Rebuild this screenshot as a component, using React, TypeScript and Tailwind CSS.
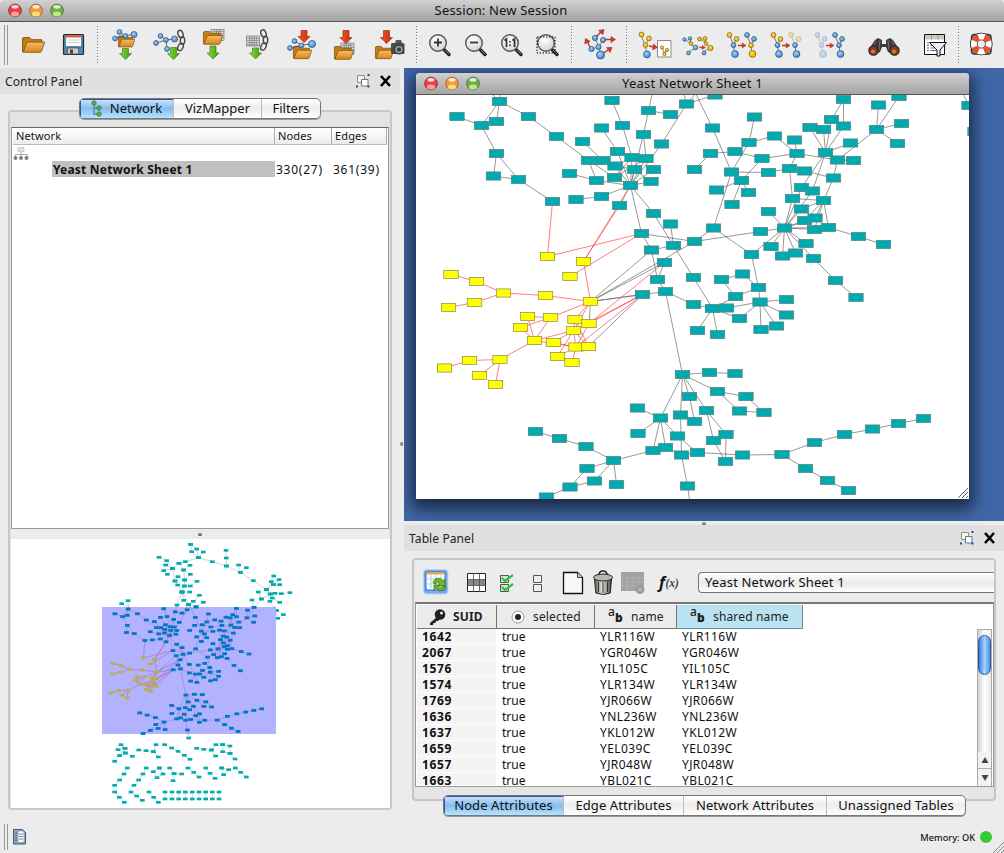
import React from "react";

type Pt = [number, number];

const N: Record<string, Pt> = {
  a1: [499.5, 101.5], a2: [457, 116.5], a3: [481.5, 125.5], a4: [496.5, 121.5], a5: [528.5, 116.5], a6: [556.5, 136.5],
  a7: [496.5, 153.5], a8: [493.5, 176], a9: [518.5, 179.5], a10: [552.5, 201.5],
  b1: [612, 100.5], b2: [622.5, 125.5], b3: [601.5, 128], b4: [582.5, 141.5], b5: [588.5, 160.5], b6: [603, 160.5],
  b7: [617.5, 151.5], b8: [632, 157.5], b9: [646, 158.5], b10: [643.5, 134.5], b11: [648.5, 110.5], b12: [670.5, 114.5],
  b13: [686.5, 104], b14: [661.5, 144], b15: [615, 166], b16: [634.5, 169.5], b17: [653.5, 169.5], b18: [614.5, 177.5],
  b19: [596.5, 180.5], b20: [569.5, 173.5], b21: [651, 181.5], b22: [630.5, 185.5], b23: [576, 199.5], b24: [601.5, 196.5],
  b25: [619.5, 205.5],
  c1: [653.5, 213.5], c2: [670.5, 224], c3: [641.5, 233.5], c4: [673.5, 245.5], c5: [694.5, 241.5], c6: [651.5, 250],
  c7: [664.5, 262.5], c8: [657.5, 279.5], c9: [693.5, 277.5], c10: [665.5, 291.5], c11: [642.5, 294.5],
  d1: [715, 95], d2: [712.5, 128], d3: [754.5, 117], d4: [749, 142.5], d5: [710.5, 153.5], d6: [735, 151.5],
  d7: [774.5, 136], d8: [794.5, 140], d9: [797, 153.5], d10: [762, 158.5], d11: [731.5, 172], d12: [768.5, 172.5],
  d13: [789.5, 168.5], d14: [804.5, 171], d15: [741.5, 180.5], d16: [716.5, 190], d17: [748.5, 192.5], d18: [732, 204.5],
  d19: [694.5, 169.5],
  e1: [843.5, 99.5], e2: [831.5, 119.5], e3: [843.5, 126], e4: [810, 127.5], e5: [823.5, 129.5], e6: [825.5, 152.5],
  e7: [850.5, 143], e8: [837.5, 160], e9: [853.5, 160.5], e10: [833.5, 178], e11: [801.5, 187.5], e12: [812.5, 191],
  e13: [792.5, 198.5], e14: [823.5, 200.5], e15: [801.5, 209], e16: [804.5, 220.5], e17: [815, 218], e18: [814.5, 229.5],
  e19: [828.5, 227.5], e20: [768.5, 211.5], e21: [713.5, 228], e22: [760.5, 231.5], e23: [784.5, 228], e24: [771, 246.5],
  e25: [782.5, 256], e26: [795.5, 253], e27: [806, 243.5], e28: [813.5, 258.5], e29: [835.5, 280.5], e30: [856, 297.5],
  e31: [858.5, 236.5], e32: [883.5, 244.5], e33: [751.5, 254.5],
  f1: [878.5, 105], f2: [899, 96.5], f3: [901.5, 123.5], f4: [897.5, 143.5], f5: [876.5, 129.5], f6: [969, 105.5], f7: [975, 131.5],
  g1: [742.5, 274], g2: [721.5, 279.5], g3: [735.5, 296.5], g4: [758.5, 287.5], g5: [760, 302], g6: [786.5, 299.5],
  g7: [786.5, 315], g8: [776.5, 326], g9: [761, 329.5], g10: [739.5, 318.5], g11: [726.5, 308], g12: [712.5, 308.5],
  g13: [693.5, 304.5], g14: [717.5, 334.5], g15: [697.5, 330.5],
  h1: [682.5, 374.5], h2: [709.5, 372.5], h3: [735, 373.5], h4: [717.5, 391.5], h5: [746, 396.5], h6: [739.5, 411],
  h7: [764, 412.5], h8: [689.5, 396.5], h9: [706.5, 410.5], h10: [680.5, 415], h11: [694.5, 421.5], h12: [637.5, 408],
  h13: [660.5, 418], h14: [638, 433.5], h15: [677.5, 436], h16: [653, 450.5], h17: [665.5, 447.5], h18: [681.5, 455],
  h19: [697.5, 452.5], h20: [713.5, 440.5], h21: [726, 434.5], h22: [725.5, 461.5], h23: [742.5, 455], h24: [782, 454.5],
  h25: [814.5, 442.5], h26: [844.5, 434.5], h27: [872.5, 429], h28: [898.5, 423.5], h29: [923.5, 418.5], h30: [805.5, 468.5],
  h31: [827.5, 480.5], h32: [848.5, 490.5], h33: [687.5, 486], h34: [613.5, 460.5], h35: [586, 446.5], h36: [559.5, 438.5],
  h37: [535.5, 431.5], h38: [587, 468.5], h39: [594.5, 481], h40: [616.5, 484.5], h41: [570, 487], h42: [546.5, 497],
  y1: [451, 274.5], y2: [476.5, 281.5], y3: [503.5, 293], y4: [474.5, 302.5], y5: [448.5, 307.5], y6: [545.5, 295.5],
  y7: [590.5, 301.5], y8: [527.5, 316.5], y9: [520.5, 327.5], y10: [550.5, 317.5], y11: [534.5, 340.5], y12: [553.5, 342.5],
  y13: [575, 319.5], y14: [589, 323.5], y15: [573.5, 330.5], y16: [576, 347], y17: [588.5, 346.5], y18: [557.5, 356.5],
  y19: [572, 362.5], y20: [500, 359.5], y21: [469.5, 360.5], y22: [444.5, 368], y23: [479.5, 375.5], y24: [495.5, 384.5],
  y25: [547.5, 256.5], y26: [583.5, 261.5], y27: [570, 276.5],
  // points beyond the visible canvas
  t1: [491, 93], t2: [500, 90], t3: [653, 90], t4: [683, 90], t5: [697, 92], t6: [694, 90], t7: [962, 92], t8: [690, 503],
};

const GREY =
  "a1-a3 a1-a4 a1-a5 a2-a3 a3-a4 a3-a7 a5-a6 a7-a8 a7-a9 a8-a9 a9-a10 a1-t1 a1-t2 a6-b5 b5-b6 b4-b6 b5-b19 b5-b18 b6-b15 b1-b2 b2-b8 b3-b7 b7-b22 b8-b22 b8-b9 b9-b22 b9-b10 b10-b11 b11-b12 b11-t3 b10-b22 b13-b14 b14-b22 b13-t4 b13-t5 b13-d1 b15-b22 b15-b16 b16-b22 b17-b22 b18-b22 b19-b22 b20-b19 b21-b22 b8-b15 b8-b18 b16-b21 b9-b18 b23-b24 b24-b22 b25-b22 b22-c1 b22-c3 c1-c4 c2-c4 c3-c5 c3-c6 c4-c6 c4-c9 c5-e21 c5-e22 c6-c8 c7-c8 c8-c10 c10-c11 c10-g13 c9-g12 c10-h1 t6-d2 d2-d11 d3-d4 d4-d7 d7-d9 d8-d9 d4-d11 d5-d6 d5-d19 d6-d10 d10-d9 d10-d15 d11-d12 d12-d13 d13-d14 d14-e10 d9-d13 d9-e8 d11-d15 d15-d16 d15-d17 d15-d18 d11-e21 d13-e13 e1-e2 e1-e3 e2-e6 e3-e6 e4-e6 e5-e6 e7-e6 e8-e6 e8-e9 e8-e10 e8-f5 e6-e11 e6-e12 e2-e5 e10-e14 e11-e23 e12-e23 e13-e23 e13-e14 e14-e15 e14-e17 e14-e19 e14-e16 e14-e18 e15-e23 e16-e23 e17-e23 e18-e23 e19-e23 e20-e23 e22-e23 e23-e24 e23-e25 e23-e26 e23-e27 e23-e28 e23-e33 e21-e33 e28-e29 e29-e30 e19-e31 e31-e32 e33-g4 f5-f1 f5-f2 f5-f3 f5-f4 f6-t7 g1-g2 g1-g4 g2-g3 g3-g4 g4-g5 g3-g12 g5-g6 g5-g7 g5-g8 g5-g9 g5-g10 g5-g11 g11-g12 g10-g12 g12-g13 g12-g14 g12-g15 h1-h2 h2-h3 h1-h4 h4-h5 h4-h6 h5-h7 h6-h7 h1-h8 h8-h11 h1-h9 h1-h10 h10-h11 h10-h18 h1-h13 h12-h13 h13-h14 h13-h15 h13-h16 h13-h17 h15-h19 h17-h18 h18-h19 h9-h20 h9-h21 h20-h22 h21-h22 h19-h23 h23-h24 h24-h25 h25-h26 h26-h27 h27-h28 h28-h29 h24-h30 h30-h31 h31-h32 h18-h33 h33-t8 h16-h34 h34-h35 h35-h36 h36-h37 h34-h38 h34-h39 h34-h40 h38-h41 h39-h41 h41-h42 y7-c6 y7-c7 y7-c5 y7-c11 y7-c11 y7-y14 y17-c11";
const RED =
  "y1-y2 y2-y3 y3-y4 y4-y5 y3-y6 y6-y7 y7-y10 y8-y10 y8-y11 y9-y10 y9-y11 y10-y11 y11-y15 y11-y20 y20-y21 y21-y22 y20-y23 y20-y24 y7-y13 y7-y15 y13-y14 y13-y15 y14-y15 y15-y16 y15-y17 y15-y12 y12-y16 y16-y17 y15-y18 y18-y16 y16-y19 y14-y16 y13-y17 y11-y16 y7-y26 y26-b25 y26-b22 y25-a10 y25-c3 y27-c3 y14-c7 y14-c11 y15-c11 y16-c11";

const toLines = (s: string) => s.split(" ").map((e) => e.split("-").map((k) => N[k]) as [Pt, Pt]);
const greyLines = toLines(GREY);
const redLines = toLines(RED);

function Edges({ red, grey }: { red: string; grey: string }) {
  return (
    <>
      {greyLines.map(([p, q], i) => (
        <line key={i} x1={p[0]} y1={p[1]} x2={q[0]} y2={q[1]} stroke={grey} />
      ))}
      {redLines.map(([p, q], i) => (
        <line key={i} x1={p[0]} y1={p[1]} x2={q[0]} y2={q[1]} stroke={red} />
      ))}
    </>
  );
}

function Graph() {
  return (
    <svg className="block h-[404px] w-[553px]" viewBox="416 95 553 404">
      <g strokeWidth="0.65">
        <Edges red="#ff3b3b" grey="#606060" />
      </g>
      {Object.entries(N).map(([k, [x, y]]) =>
        k[0] === "t" ? null : (
          <rect key={k} x={x - 7.2} y={y - 4.1} width="14.4" height="8.2" fill={k[0] === "y" ? "#ffff00" : "#00abb0"} stroke={k[0] === "y" ? "#8a8a50" : "#5f7f80"} strokeWidth="0.7" />
        )
      )}
      <path d="M958 498l10-10M962 498l6-6M966 498l2-2" stroke="#555" strokeWidth="0.9" />
    </svg>
  );
}

const CHAINS: Pt[][] = [
  [[572, 73], [575, 95], [595, 113], [590, 87], [572, 73]], [[610, 96], [595, 113], [637, 125], [679, 138], [679, 114], [678, 91]],
  [[679, 138], [721, 157], [716, 135]], [[739, 143], [721, 157], [760, 182], [799, 209], [814, 185], [821, 168]],
  [[837, 179], [820, 194], [839, 194]], [[820, 194], [799, 209], [812, 222], [825, 220], [844, 221], [870, 218]],
  [[812, 222], [784, 237], [775, 216]], [[784, 237], [762, 262], [756, 240]], [[799, 209], [817, 234], [839, 247]],
  [[799, 209], [810, 244], [829, 271], [850, 284], [833, 295], [829, 271]], [[762, 262], [741, 293]],
  [[595, 113], [556, 125], [537, 130], [518, 146], [500, 122], [477, 112]], [[497, 135], [518, 146], [491, 152]],
  [[502, 163], [518, 146], [525, 183], [533, 195], [546, 216], [553, 198], [554, 180], [551, 150], [570, 136]],
  [[537, 130], [551, 150]], [[534, 170], [525, 183]], [[571, 163], [554, 180]], [[591, 184], [571, 198], [553, 198]],
  [[546, 216], [569, 216]], [[546, 216], [531, 255], [525, 275]], [[546, 216], [551, 241], [566, 253], [562, 268]],
  [[546, 216], [566, 253], [580, 244], [598, 226]], [[566, 253], [588, 260], [610, 247]], [[365, 251], [384, 268], [384, 242]],
  [[566, 253], [586, 292]], [[562, 630], [566, 654]],
  [[344, 724], [359, 707], [375, 685], [354, 689], [376, 699], [363, 674], [375, 685]], [[359, 707], [376, 699], [397, 709]],
  [[416, 690], [438, 692], [460, 695], [468, 674]], [[460, 695], [475, 711]],
  [[494, 674], [515, 684], [534, 694], [553, 706], [570, 718]], [[590, 685], [611, 688], [634, 690], [648, 674]], [[634, 690], [647, 708]],
  [[668, 674], [668, 695], [690, 700], [705, 717]], [[668, 674], [690, 678], [690, 700]],
  [[382, 744], [372, 762], [359, 780], [344, 796]], [[439, 744], [429, 762], [416, 780], [402, 796]],
  [[478, 744], [460, 755], [471, 773], [489, 762], [478, 744]], [[509, 744], [522, 761], [545, 762]], [[522, 761], [519, 782]],
  [[564, 744], [581, 757], [597, 771]], [[617, 744], [630, 760], [645, 775]], [[665, 744], [686, 749], [671, 764], [665, 744]],
  [[706, 744], [722, 757], [739, 771]], [[344, 816], [358, 832], [373, 847]], [[393, 816], [410, 828], [427, 841]],
  [[447, 816], [461, 832], [475, 847]],
  ...[495, 516, 536, 556, 577, 597, 617, 637, 657].map((x): Pt[] => [[x, 816], [x, 837]]),
];

function Overview() {
  const inside = (p: Pt) => p[0] > 306 && p[0] < 828 && p[1] > 262 && p[1] < 641;
  return (
    <svg className="block h-[269px] w-[379px] bg-white" viewBox="33 57 1137 807">
      {CHAINS.map((c, i) => (
        <polyline key={i} points={c.join(" ")} fill="none" stroke="#c3c3be" strokeWidth="2" />
      ))}
      {CHAINS.flat().filter((p) => !inside(p)).map((p, i) => (
        <rect key={i} x={p[0] - 7} y={p[1] - 4} width="14" height="8" fill="#00adb0" />
      ))}
      <rect x="306" y="261" width="522" height="381" fill="#b2b2ff" />
      <g transform="translate(306 261) scale(.944) translate(-416 -95)">
        <g strokeWidth="2" opacity=".75">
          <Edges red="#c050a8" grey="#8a80c0" />
        </g>
        {Object.entries(N).map(([k, [x, y]]) =>
          k[0] === "t" || k === "f6" || k === "f7" ? null : <rect key={k} x={x - 7.5} y={y - 4.5} width="15" height="9" fill={k[0] === "y" ? "#b8b04c" : "#0077c8"} />
        )}
      </g>
    </svg>
  );
}

function Defs() {
  return (
    <svg className="absolute h-0 w-0">
      <defs>
        <linearGradient id="fold" x1="0" y1="0" x2="0" y2="1">
          <stop offset="0" stopColor="#f6bd62" />
          <stop offset="1" stopColor="#d98516" />
        </linearGradient>
        <radialGradient id="blue" cx=".4" cy=".35" r=".65">
          <stop offset="0" stopColor="#a5d2ff" />
          <stop offset="1" stopColor="#3f86d0" />
        </radialGradient>
        <radialGradient id="gold" cx=".4" cy=".35" r=".65">
          <stop offset="0" stopColor="#ffe14a" />
          <stop offset="1" stopColor="#e8ae00" />
        </radialGradient>
        <radialGradient id="glass" cx=".4" cy=".3" r=".75">
          <stop offset="0" stopColor="#ffffff" />
          <stop offset="1" stopColor="#cfd3d3" />
        </radialGradient>
        <linearGradient id="green" x1="0" y1="0" x2="1" y2="0">
          <stop offset="0" stopColor="#8be03a" />
          <stop offset="1" stopColor="#3f9a10" />
        </linearGradient>
        <linearGradient id="red" x1="0" y1="0" x2="1" y2="0">
          <stop offset="0" stopColor="#f0562c" />
          <stop offset="1" stopColor="#c92c08" />
        </linearGradient>
        <linearGradient id="can" x1="0" y1="0" x2="1" y2="0">
          <stop offset="0" stopColor="#55554c" />
          <stop offset=".45" stopColor="#e8e8dc" />
          <stop offset="1" stopColor="#44443c" />
        </linearGradient>
      </defs>
    </svg>
  );
}

const Folder = ({ x, y, s = 1 }: { x: number; y: number; s?: number }) => (
  <g transform={`translate(${x} ${y}) scale(${s})`} stroke="#7c5215" strokeWidth="0.9" strokeLinejoin="round">
    <path d="M.5 14.5V1.2L1.5.5h6l1.8 2.2h10.5v3L17 14.5z" fill="#c77d16" />
    <path d="M1 15.2L4.800 5.8l1.400-.7h16.300L19.400 14.500l-1 .8z" fill="url(#fold)" />
  </g>
);
const Down = ({ x, y, fill, h = 12 }: { x: number; y: number; fill: string; h?: number }) => (
  <path d={`M${x - 3} ${y}h6v${h - 6}h3l-6 6l-6-6h3z`} fill={`url(#${fill})`} stroke={fill === "red" ? "#9c3018" : "#4b7c22"} strokeWidth="0.7" />
);
const Ball = ({ p, r = 2.4, c = "blue", o = 1 }: { p: Pt; r?: number; c?: string; o?: number }) => (
  <circle cx={p[0]} cy={p[1]} r={r} fill={`url(#${c})`} stroke={c === "blue" ? "#31587f" : "#8c6a08"} strokeWidth="0.8" opacity={o} />
);
const Arrow = ({ d }: { d: string }) => <path d={d} stroke="#cc3328" strokeWidth="1.5" fill="none" />;
const Head = ({ x, y, a, s = 1 }: { x: number; y: number; a: number; s?: number }) => (
  <path transform={`translate(${x} ${y}) rotate(${a}) scale(${s})`} d="M0 0l-4.500-3v6z" fill="#d8382a" stroke="#8c2820" strokeWidth="0.5" />
);
const RightArrow = ({ x }: { x: number }) => (
  <>
    <Arrow d={`M${x} 45.500h5`} />
    <Head x={x + 8} y={45.5} a={0} s={0.85} />
  </>
);
const Grid = ({ x, y, w = 13, h = 11 }: { x: number; y: number; w?: number; h?: number }) => (
  <g stroke="#777" strokeWidth="0.7">
    <rect x={x} y={y} width={w} height={h} fill="#e4e4e4" />
    {[2.2, 4.4, 6.6, 8.8].map((k) => <path key={k} d={`M${x} ${y + k}h${w}M${x + k + 1} ${y}v${h}`} />)}
  </g>
);
const Chain = ({ x, y }: { x: number; y: number }) => (
  <g fill="none" stroke="#4a4a4a" strokeWidth="1.500">
    <ellipse cx={x} cy={y + 4} rx="2.500" ry="3.800" transform={`rotate(-20 ${x} ${y + 4})`} />
    <ellipse cx={x + 2} cy={y + 10.5} rx="2.200" ry="3.800" />
    <ellipse cx={x} cy={y + 17} rx="2.500" ry="3.800" transform={`rotate(25 ${x} ${y + 17})`} />
  </g>
);
const Lens = ({ x }: { x: number }) => (
  <>
    <path d={`M${x + 6} 49.500l5 5`} stroke="#222" strokeWidth="3.400" strokeLinecap="round" />
    <path d={`M${x + 7} 50l4 4`} stroke="#888" strokeWidth="1" />
    <circle cx={x} cy="43" r="8.300" fill="url(#glass)" stroke="#555" strokeWidth="1.400" />
  </>
);
const Tree = ({ x, c, big, o = 1 }: { x: number; c: string; big: string; o?: number }) => (
  <g opacity={o}>
    <path d={`M${x} 35l4 10l1 9M${x + 7} 39l-3 6`} stroke="#555" strokeWidth="0.8" fill="none" />
    <Ball p={[x, 35]} c={c} />
    <Ball p={[x + 7, 39]} c={c} />
    <Ball p={[x + 4, 45.2]} c={big} />
    <Ball p={[x + 5.5, 54]} c={big} r={3.4} />
  </g>
);

function Slot({ x, w, children }: { x: number; w: number; children?: React.ReactNode }) {
  return (
    <svg className="block h-full shrink-0" width={w} height="46" viewBox={`${x} 22 ${w} 46`}>
      {children}
    </svg>
  );
}
const Sep = ({ x }: { x: number }) => <path d={`M${x} 26v38`} stroke="#777" strokeWidth="1" strokeDasharray="1 2" />;

function Toolbar() {
  return (
    <div className="flex h-[46px] shrink-0 bg-[#ececec]">
      <Slot x={0} w={16}><path d="M4.500 25v40M7.500 25v40" stroke="#999" /></Slot>
      <Slot x={16} w={38}><Folder x={22} y={37} /></Slot>
      <Slot x={54} w={38}>
        <rect x="63.500" y="34.500" width="20" height="20" rx="1" fill="#5b85a8" stroke="#1e2c38" strokeWidth="1.200" />
        <path d="M66 35h15v11H66z" fill="#fff" />
        <path d="M66 35h15v2.500H66z" fill="#d8604a" />
        <path d="M67.500 40h12M67.500 42.500h12" stroke="#bbb" strokeWidth=".8" />
        <path d="M67.500 48h11v6h-11z" fill="#ccc" stroke="#3b4a55" strokeWidth=".7" />
        <path d="M70 49.500h3v4h-3z" fill="#444" />
      </Slot>
      <Slot x={92} w={12}><Sep x={97.500} /></Slot>
      <Slot x={104} w={42}>
        <Folder x={118} y={35.500} s={0.75} />
        <path d="M119 32l6.500 4l8-2M115 38l10-2" stroke="#345" strokeWidth=".8" fill="none" />
        <Ball p={[119.500, 32]} /><Ball p={[115, 38.500]} /><Ball p={[125.500, 36]} /><Ball p={[134, 34.500]} r={3} />
        <Down x={125.500} y={48.500} h={11} fill="green" />
      </Slot>
      <Slot x={146} w={48}>
        <path d="M156 43l10-3l8-1M161 36l5 4l1 9" stroke="#345" strokeWidth=".8" fill="none" />
        <Ball p={[156, 43]} /><Ball p={[160.500, 36]} /><Ball p={[166, 40]} /><Ball p={[174.500, 39]} r={3} /><Ball p={[167, 49]} />
        <Chain x={180.500} y={30} /><Down x={173.500} y={47.500} fill="green" />
      </Slot>
      <Slot x={194} w={40}><Grid x={211} y={29.500} /><Folder x={203} y={31} s={0.87} /><Down x={213} y={46} h={13} fill="green" /></Slot>
      <Slot x={234} w={42}><Grid x={246.500} y={36} h={10} /><Chain x={263.500} y={29.500} /><Down x={255.500} y={48} h={11} fill="green" /></Slot>
      <Slot x={276} w={50}>
        <Folder x={293} y={46} s={0.83} />
        <path d="M290 48l12-3l10-1M294 41l8 4" stroke="#345" strokeWidth=".8" fill="none" />
        <Ball p={[294.500, 41]} /><Ball p={[290, 48]} /><Ball p={[312, 44]} r={3.500} />
        <Down x={304} y={30.500} fill="red" />
        <Ball p={[301.500, 45.500]} />
      </Slot>
      <Slot x={326} w={40}><Grid x={341} y={43} /><Folder x={334} y={46} s={0.87} /><Down x={346} y={30.500} h={13} fill="red" /></Slot>
      <Slot x={366} w={46}>
        <Folder x={375} y={46} s={0.83} /><Down x={386.500} y={30.500} h={13} fill="red" />
        <rect x="391" y="43" width="13.500" height="11" rx="1.500" fill="#4a4a4a" /><path d="M395 43l1-3h5l1 3z" fill="#555" />
        <circle cx="399" cy="49.500" r="4.500" fill="#8b9aa0" stroke="#222" /><circle cx="399" cy="49.500" r="2" fill="#2b3a40" />
      </Slot>
      <Slot x={412} w={10}><Sep x={416.500} /></Slot>
      <Slot x={422} w={36}><Lens x={438} /><path d="M434 42.500h8M438 38.500v8" stroke="#333" strokeWidth="1.800" /></Slot>
      <Slot x={458} w={36}><Lens x={474} /><path d="M470 42.500h8" stroke="#333" strokeWidth="1.800" /></Slot>
      <Slot x={494} w={36}>
        <Lens x={510} />
        <path d="M504.500 40.500l2-1.500v8M512.500 40.500l2-1.500v8M510 41v1.500M510 44.500v1.500" stroke="#333" strokeWidth="1.700" fill="none" />
      </Slot>
      <Slot x={530} w={36}><Lens x={546} /><rect x="537" y="37" width="18" height="16" fill="none" stroke="#000" strokeWidth="1" strokeDasharray="1.500 1.500" /></Slot>
      <Slot x={566} w={12}><Sep x={571.500} /></Slot>
      <Slot x={578} w={44}>
        <path d="M595 38l4 9l-8 2M599 47l2 8M603 40l-4 7" stroke="#555" strokeWidth=".7" fill="none" />
        <Arrow d="M596 37l5-5M604 39.500h8M591 49l-3.500-7M601 55l7-5" />
        <Head x={604} y={29.500} a={-45} /><Head x={615.500} y={39.500} a={0} /><Head x={585.500} y={38.500} a={-115} /><Head x={612} y={47.500} a={-35} />
        <Ball p={[595, 38]} r={2.600} /><Ball p={[603, 40]} r={2.600} /><Ball p={[598.500, 47]} r={2.600} /><Ball p={[591.500, 49]} r={2.600} /><Ball p={[600.500, 55]} r={4} />
      </Slot>
      <Slot x={622} w={10}><Sep x={626.500} /></Slot>
      <Slot x={632} w={44}>
        <path d="M641 35l4 10l2 9M649 39l-4 6" stroke="#555" strokeWidth=".7" fill="none" />
        <Ball p={[641.500, 34.500]} c="gold" /><Ball p={[649, 38.500]} c="gold" /><Ball p={[645.500, 45]} c="gold" /><Ball p={[647, 54.500]} r={3.400} />
        <path d="M657.500 40.500h13.500v16.500h-13.500z" fill="#fff" stroke="#888" />
        <Arrow d="M649 46l5 1" /><Head x={657.500} y={47.500} a={8} />
        <path d="M662 47.500l2.500 6l2.500-4" stroke="#555" strokeWidth=".7" fill="none" />
        <Ball p={[662, 47.500]} c="gold" r={1.600} /><Ball p={[664.500, 54]} c="gold" r={1.600} /><Ball p={[667, 50]} c="gold" r={1.600} />
      </Slot>
      <Slot x={676} w={44}>
        <path d="M684 39l8 5M690 38l1 6l5 4l-8 4M699 38l7 5M705 38l1 6l4 4l-7 4" stroke="#555" strokeWidth=".7" fill="none" />
        <Ball p={[684.500, 39.500]} r={1.700} /><Ball p={[690, 38.500]} r={1.700} /><Ball p={[691, 43.500]} c="gold" r={1.800} /><Ball p={[695.500, 47.500]} r={2.300} /><Ball p={[688.500, 53]} r={1.900} />
        <Arrow d="M699.500 47.500h3" /><Head x={705.500} y={47.500} a={0} s={0.7} />
        <Ball p={[699.500, 39]} c="gold" r={1.900} /><Ball p={[705, 38.500]} c="gold" r={1.900} /><Ball p={[706, 43.500]} c="gold" r={1.800} /><Ball p={[710.500, 48]} c="gold" r={2.600} /><Ball p={[704, 53]} r={1.900} />
      </Slot>
      <Slot x={720} w={44}><Tree x={729.500} c="gold" big="blue" /><RightArrow x={738} /><Tree x={747} c="blue" big="gold" /></Slot>
      <Slot x={764} w={44}>
        <Tree x={773.500} c="gold" big="blue" /><RightArrow x={782} />
        <g opacity=".4"><path d="M791 35l4 10l3.500-6" stroke="#555" strokeWidth=".8" fill="none" /><Ball p={[791, 35]} c="gold" /><Ball p={[798.500, 39]} c="gold" /></g>
        <path d="M795 45l1 9" stroke="#555" strokeWidth=".8" /><Ball p={[795, 45.200]} /><Ball p={[796.500, 54]} r={3.400} />
      </Slot>
      <Slot x={808} w={42}><Tree x={817.500} c="blue" big="blue" o={0.35} /><RightArrow x={826} /><Tree x={835} c="blue" big="blue" /></Slot>
      <Slot x={850} w={65}>
        <path d="M869 49l6-9l3-2l4 2v4h4v-4l4-2l3 2l6 9l-4 6l-7-3l-2-5h-4l-2 5l-7 3z" fill="#3a3a3a" />
        <path d="M876 41l-4 8M892 41l4 8M880 40l-1 10M888 40l1 10" stroke="#777" strokeWidth="1" />
        <circle cx="873.500" cy="50.500" r="4.600" fill="#8c3c18" stroke="#2c2420" strokeWidth="1.300" /><circle cx="894.500" cy="50.500" r="4.600" fill="#8c3c18" stroke="#2c2420" strokeWidth="1.300" />
        <circle cx="873" cy="51.500" r="2" fill="#d77a45" /><circle cx="894" cy="51.500" r="2" fill="#d77a45" />
      </Slot>
      <Slot x={915} w={40}>
        <path d="M924.500 34.500h20v20h-20z" fill="#fff" stroke="#111" /><path d="M925 35h19v4.500h-19z" fill="#c9cec4" />
        <path d="M931.500 35v4.500M938 35v4.500" stroke="#888" strokeWidth=".8" />
        <path d="M927 43h2M927 45.500h2M927 48h2M927 50.500h2M930.500 43h6M930.500 45.500h3M930.500 48h4M930.500 50.500h6" stroke="#5560a0" />
        <path d="M929.500 42.500h17l-6.500 7.500v6h-3v-6z" fill="#eee" stroke="#111" />
      </Slot>
      <Slot x={955} w={49}>
        <Sep x={958.500} />
        <rect x="971.500" y="34.500" width="19.500" height="19.500" rx="3" fill="none" stroke="#333" strokeWidth="1.500" />
        <circle cx="981.300" cy="44" r="7.500" fill="none" stroke="#333" strokeWidth="7.600" />
        <circle cx="981.300" cy="44" r="7.500" fill="none" stroke="#fff" strokeWidth="6" />
        <circle cx="981.300" cy="44" r="7.500" fill="none" stroke="#e5502a" strokeWidth="6" strokeDasharray="5.900 5.880" strokeDashoffset="-2.900" />
      </Slot>
    </div>
  );
}

function Lights() {
  return (
    <svg className="absolute left-[8px] top-[3px] h-[15px] w-[58px]" viewBox="0 0 58 15">
      {[["#e8414a", "#ffb0a8", "#8b2a2e"], ["#f09a38", "#ffe68a", "#94602a"], ["#6fb043", "#cdf09a", "#467030"]].map(([c, l, s], i) => (
        <g key={i}>
          <circle cx={7 + i * 21} cy="7.500" r="6.400" fill={c} stroke={s} strokeWidth="0.8" />
          <ellipse cx={7 + i * 21} cy="11" rx="4" ry="2.600" fill={l} opacity=".85" />
          <ellipse cx={7 + i * 21} cy="3.800" rx="3.500" ry="1.900" fill="#fff" opacity=".8" />
        </g>
      ))}
    </svg>
  );
}

function PanelHead({ title }: { title: string }) {
  return (
    <div className="flex h-[26px] shrink-0 items-center bg-[#e0e0e0] pl-[5px] pr-[8px]">
      <span className="flex-1 pt-[1px] text-[12px] tracking-[0.1px] text-[#222]">{title}</span>
      <svg className="h-[14px] w-[36px]" viewBox="0 0 36 14">
        <path d="M1.500 1.500h7v7h-7z" fill="#f4f4ff" stroke="#9c9060" />
        <path d="M5.500 5.500h6.500v6.500h-6.500z" fill="#fff" stroke="#5e7590" />
        <path d="M11.500 0h2v2h-2zM0 11.500h2v2H0zM11.500 11.500h2v2h-2z" fill="#234a86" />
        <path d="M25 2l9 10M34 2l-9 10" stroke="#000" strokeWidth="2.600" />
      </svg>
    </div>
  );
}

const TABBAR = "relative z-10 flex h-[21px] overflow-hidden rounded-[5px] border border-[#777] bg-linear-to-b from-white via-[#ededed] to-white text-[13px] text-[#111] shadow-[0_1px_0_#999]";
const ACTIVE = "flex items-center justify-center bg-linear-to-b from-[#cfe5fb] via-[#86bdf0] to-[#b4e4ff] shadow-[inset_1px_1px_0_#3a50a0]";
const TAB = "flex items-center justify-center border-l border-[#bbb]";

function ControlPanel() {
  return (
    <div className="flex w-[400px] shrink-0 flex-col">
      <PanelHead title="Control Panel" />
      <div className={`${TABBAR} ml-[79px] mt-[4px] w-[242px] shrink-0`}>
        <div className={`${ACTIVE} w-[93px]`}>
          <svg className="mr-[8px] h-[17px] w-[11px]" viewBox="0 0 11 17">
            <path d="M3 3v12M3 8h5M3 14h5" stroke="#666" fill="none" />
            <circle cx="3" cy="3" r="2.300" fill="#4faa50" stroke="#2f7a38" strokeWidth=".6" />
            <circle cx="8" cy="8" r="2.300" fill="#4faa50" stroke="#2f7a38" strokeWidth=".6" />
            <circle cx="8" cy="14" r="2.300" fill="#4faa50" stroke="#2f7a38" strokeWidth=".6" />
          </svg>
          <span>Network</span>
        </div>
        <div className={`${TAB} w-[88px]`}>VizMapper</div>
        <div className={`${TAB} flex-1`}>Filters</div>
      </div>
      <div className="-mt-[9px] ml-[8px] flex h-[700px] w-[384px] flex-col rounded-[4px] border-2 border-[#c8c8c8] bg-[#e4e4e4] px-px pt-[15px]">
        <div className="flex h-[402px] shrink-0 flex-col border border-t-[#666] border-[#999] bg-white text-[12px] text-[#111]">
          <div className="mx-px flex h-[17px] border-b border-[#bbb] bg-linear-to-b from-white via-[#f6f6f6] to-[#ececec] text-[11px] leading-[16px] tracking-[0.15px]">
            <div className="w-[261px] pl-[3px]">Network</div>
            <div className="w-[57px] border-l border-[#aaa] pl-[3px]">Nodes</div>
            <div className="flex-1 border-x border-[#aaa] pl-[3px]">Edges</div>
          </div>
          <svg className="ml-[1px] mt-[2px] h-[14px] w-[18px]" viewBox="0 0 18 14">
            <path d="M5 .5h6v4H5z" fill="#e4e4e4" stroke="#bbb" strokeWidth=".7" />
            <path d="M8 5v6M2.500 10V7.500h11.500V10" stroke="#aaa" fill="none" />
            <circle cx="2.500" cy="11" r="2" fill="#808080" /><circle cx="8" cy="11" r="2" fill="#808080" /><circle cx="13.500" cy="11" r="2" fill="#808080" />
          </svg>
          <div className="flex h-[16px] pl-[40px] text-[12px] leading-[17px]">
            <div className="w-[223px] bg-[#c0c0c0] pl-[1px] font-bold tracking-[0.2px]">Yeast Network Sheet 1</div>
            <div className="w-[57px] pl-[1px] tracking-[0.75px]">330(27)</div>
            <div className="pl-px tracking-[0.75px]">361(39)</div>
          </div>
        </div>
        <div className="flex h-[10px] shrink-0 items-center justify-center bg-[#ececec]"><span className="h-[3px] w-[4px] rounded-t-full bg-[#777]" /></div>
        <Overview />
      </div>
    </div>
  );
}

const ROWS = ["1642 YLR116W", "2067 YGR046W", "1576 YIL105C", "1574 YLR134W", "1769 YJR066W", "1636 YNL236W", "1637 YKL012W", "1659 YEL039C", "1657 YJR048W", "1663 YBL021C"].map((r) => r.split(" "));

const Ab = () => (
  <span className="flex w-[23px] text-[12px] font-medium leading-[14px] text-[#222]">
    <span className="-mt-[4px]">a</span><span className="mt-[2px] font-black">b</span>
  </span>
);

function TableTools() {
  return (
    <svg className="block h-[42px] w-[283px] shrink-0" viewBox="415 560 283 42">
      <rect x="423" y="569" width="25.500" height="25.500" rx="4" fill="#6fa8f4" opacity=".35" />
      <rect x="424" y="570" width="23.500" height="23.500" rx="3" fill="#5a98f0" opacity=".7" />
      <rect x="426" y="572" width="19" height="18" fill="#fff" stroke="#2c6cb4" />
      <path d="M426 573.500h19" stroke="#f0a040" strokeWidth="2" />
      <path d="M426 579h19M426 584h19M431 575v15M436 575v15M441 575v15" stroke="#a9cdf0" />
      <path d="M433 583c1-6 8-6 10-2l2-2v7h-7l2-2c-2-2-4-2-4 0zM446 586c-1 6-8 6-10 2l-2 2v-5h6l-2 2c2 2 4 1 5-1z" fill="#6db52a" stroke="#35750f" strokeWidth=".7" />
      <path d="M467.500 573.500h18v18h-18z" fill="#fff" stroke="#222" /><path d="M468 580h17v5h-17z" fill="#888" />
      <path d="M467.500 579.500h18M467.500 585.500h18M473.500 573v19M479.500 573v19" stroke="#444" strokeWidth=".8" />
      <path d="M500.500 575.500h8v7h-8zM500.500 584.500h8v7h-8z" fill="#ddd" stroke="#555" />
      <path d="M502 578l3 3l8-6M502 587l3 3l8-6" stroke="#22c932" strokeWidth="2.200" fill="none" />
      <path d="M533.500 575.500h8v7h-8zM533.500 584.500h8v7h-8z" fill="#eee" stroke="#555" />
      <path d="M563.500 572.500h14l5 5v16h-19z" fill="#f8f8f6" stroke="#111" strokeWidth="1.300" /><path d="M577.500 572.500v5h5" fill="#ccc" stroke="#111" strokeWidth=".8" />
      <path d="M594.500 579h17l-1.200 14q-7 3-14.500 0z" fill="url(#can)" stroke="#222" />
      <path d="M598.500 582v10M603 582v11M607.500 582v10" stroke="#333" />
      <ellipse cx="603" cy="577.500" rx="9.500" ry="3.500" fill="#b8b8ac" stroke="#222" /><path d="M599 575q0-4 4-4t4 4" fill="none" stroke="#222" strokeWidth="1.500" />
      <path d="M621 572h23v19h-23z" fill="#a2a2a2" /><path d="M621 578h23M621 582h23M621 586h23M627 577v14M633 577v14M639 577v14" stroke="#b4b4b4" strokeWidth=".8" />
      <circle cx="640" cy="589.500" r="4.500" fill="#999" /><path d="M638 587.500l4 4M642 587.500l-4 4" stroke="#ccc" />
      <text x="659" y="588" fontFamily="Open Sans, sans-serif" fontStyle="italic" fontWeight="700" fontSize="16" fill="#111">f</text>
      <text x="665.500" y="587" fontFamily="Liberation Serif, serif" fontStyle="italic" fontWeight="700" fontSize="11.500" fill="#444">(x)</text>
    </svg>
  );
}

function TablePanel() {
  return (
    <div className="flex h-[295px] flex-col">
      <PanelHead title="Table Panel" />
      <div className="ml-[8px] mt-[7px] flex h-[243px] w-[584px] flex-col rounded-[4px] border-2 border-[#c6c6c6] bg-[#e6e6e6] pl-px">
        <div className="flex h-[42px] shrink-0 bg-[#ececec]">
          <TableTools />
          <div className="mt-[12px] flex h-[21px] flex-1 items-center rounded-l-[4px] border border-r-0 border-[#777] bg-linear-to-b from-white via-[#eaeaea] to-white pl-[6px] text-[13px] tracking-[0.15px] text-[#111]">Yeast Network Sheet 1</div>
        </div>
        <div className="flex h-[185px] shrink-0 flex-col border border-t-2 border-[#999] border-t-[#777] bg-white pl-px">
          <div className="flex h-[25px] shrink-0 pt-px text-[12px] tracking-[0.15px] text-[#222]">
            <div className="flex w-[80px] items-center border-b border-r border-[#777] bg-[#ebebeb] pl-[12px] font-bold">
              <svg className="mr-[7px] h-[16px] w-[17px]" viewBox="0 0 17 16">
                <circle cx="11" cy="5.500" r="5.300" fill="#222" /><path d="M8 8l-7 6v2h3l.5-2h2l.5-2h2l2-2z" fill="#222" /><circle cx="12.500" cy="4" r="1.500" fill="#eee" />
              </svg>
              SUID
            </div>
            <div className="flex w-[98px] items-center border-b border-r border-[#777] bg-[#ebebeb] pl-[14px]">
              <svg className="mr-[8px] h-[14px] w-[14px]" viewBox="0 0 14 14"><circle cx="7" cy="7" r="6" fill="#fff" stroke="#999" /><circle cx="7" cy="7" r="3" fill="#222" /></svg>
              selected
            </div>
            <div className="flex w-[82px] items-center border-b border-r border-[#777] bg-[#ebebeb] pl-[13px]"><Ab />name</div>
            <div className="flex w-[126px] items-center border-b border-r border-[#6c8f9c] bg-[#bae2f0] pl-[13px]"><Ab />shared name</div>
          </div>
          <div className="flex min-h-0 flex-1">
            <div className="flex-1 text-[12px] leading-[16px] text-[#111]">
              {ROWS.map(([id, name]) => (
                <div key={id} className="flex h-[16px] last:h-[13px]">
                  <div className="w-[79px] border-b border-white bg-[#f4f4f4] pl-[5px] font-bold tracking-[0.6px]">{id}</div>
                  <div className="w-[98px] pl-[6px]">true</div>
                  <div className="w-[82px] pl-[6px] tracking-[0.4px]">{name}</div>
                  <div className="pl-[6px] tracking-[0.4px]">{name}</div>
                </div>
              ))}
            </div>
            <div className="mr-[1px] flex w-[15px] flex-col border-x border-t border-[#aaa] bg-linear-to-r from-[#d0d0d0] via-white to-[#e8e8e8]">
              <div className="mt-[5px] h-[40px] rounded-full border border-[#30569c] bg-linear-to-r from-[#3b7ad0] via-[#a4d2ff] to-[#4c92e0]" />
              <div className="flex-1" />
              <div className="flex h-[17px] items-center justify-center border-b border-[#aaa] bg-[#f2f2f2]"><svg className="h-[6px] w-[8px]" viewBox="0 0 8 6"><path d="M4 0l3.500 6h-7z" fill="#444" /></svg></div>
              <div className="flex h-[17px] items-center justify-center bg-[#f2f2f2]"><svg className="h-[6px] w-[8px]" viewBox="0 0 8 6"><path d="M.5 0h7L4 6z" fill="#444" /></svg></div>
            </div>
          </div>
        </div>
      </div>
      <div className={`${TABBAR} -mt-[6px] ml-[39px] w-[523px] shrink-0 tracking-[0.1px]`}>
        <div className={`${ACTIVE} w-[119px]`}>Node Attributes</div>
        <div className={`${TAB} w-[120px]`}>Edge Attributes</div>
        <div className={`${TAB} w-[143px]`}>Network Attributes</div>
        <div className={`${TAB} flex-1`}>Unassigned Tables</div>
      </div>
    </div>
  );
}

export default function App() {
  return (
    <div className="flex h-[853px] w-[1004px] flex-col overflow-hidden bg-[#ececec] font-['Noto_Sans','Open_Sans',sans-serif] whitespace-nowrap">
      <Defs />
      <div className="relative flex h-[22px] shrink-0 items-center justify-center rounded-t-[4px] border-b border-[#555] bg-linear-to-b from-[#d2d2d2] to-[#a2a2a2] pt-px text-[13px] tracking-[0.15px] text-[#111]">
        <Lights />
        <span className="-ml-[2px]">Session: New Session</span>
      </div>
      <Toolbar />
      <div className="flex h-[752px] shrink-0">
        <ControlPanel />
        <div className="flex w-[4px] shrink-0 items-center"><span className="h-[4px] w-[3px] rounded-l-full bg-[#888]" /></div>
        <div className="flex w-[600px] flex-col">
          <div className="h-[453px] shrink-0 overflow-hidden bg-[#4166a8] pl-[12px] pt-[5px]">
            <div className="w-[553px] overflow-hidden rounded-t-[4px] bg-white shadow-[0_6px_16px_4px_rgba(0,0,0,0.6)]">
              <div className="relative flex h-[22px] items-center justify-center border-b border-[#555] bg-linear-to-b from-[#d0d0d0] to-[#a4a4a4] pt-px text-[13px] tracking-[0.2px] text-[#111]">
                <Lights />
                <span>Yeast Network Sheet 1</span>
              </div>
              <Graph />
            </div>
          </div>
          <div className="flex h-[4px] shrink-0 items-center justify-center"><span className="h-[3px] w-[4px] rounded-t-full bg-[#888]" /></div>
          <TablePanel />
        </div>
      </div>
      <div className="flex h-[33px] items-start">
        <svg className="h-[33px] w-[40px]" viewBox="0 820 40 33">
          <path d="M4.500 824v26M7.500 824v26" stroke="#999" />
          <path d="M13.500 829.500h9l3 3v11.500h-12z" fill="#8fa9c0" stroke="#3d5a74" />
          <path d="M15 833h2M15 838h2" stroke="#2d90d0" strokeWidth="1.500" /><path d="M15 835.500h2M15 840.500h2" stroke="#e04a28" strokeWidth="1.500" />
          <path d="M18.500 831.500h5v10.500h-5z" fill="#fff" /><path d="M19 834h4M19 836.500h4M19 839h4" stroke="#6682a0" />
        </svg>
        <div className="flex-1" />
        <span className="pt-[11px] text-[9.2px] font-medium leading-[14px] text-[#111]">Memory: OK</span>
        <span className="ml-[5px] mt-[11px] h-[12px] w-[12px] rounded-full bg-[#33cc33]" />
        <svg className="h-[33px] w-[12px]" viewBox="0 0 12 33"><path d="M1 33l11-11M5 33l7-7M9 33l3-3" stroke="#888" /></svg>
      </div>
    </div>
  );
}
